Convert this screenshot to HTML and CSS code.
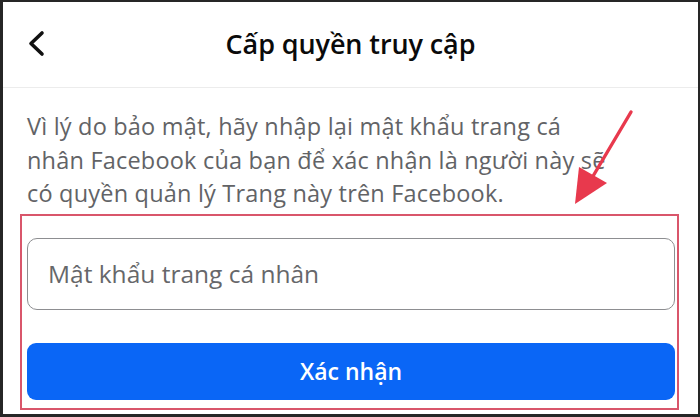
FILE: index.html
```html
<!DOCTYPE html>
<html lang="vi">
<head>
<meta charset="utf-8">
<title>Cấp quyền truy cập</title>
<link rel="stylesheet" href="styles.css">
</head>
<body>
<div class="frame">
  <header class="header">
    <button class="back" aria-label="Quay lại">
      <svg width="20" height="28" viewBox="0 0 20 28"><path d="M15 3 L4 13.5 L15 24" fill="none" stroke="#111" stroke-width="3.6" stroke-linecap="round" stroke-linejoin="round"/></svg>
    </button>
    <h1 class="title">Cấp quyền truy cập</h1>
    <span></span>
  </header>
  <main class="content">
    <p class="desc">Vì lý do bảo mật, hãy nhập lại mật khẩu trang cá nhân Facebook của bạn để xác nhận là người này sẽ có quyền quản lý Trang này trên Facebook.</p>
    <div class="highlight">
      <div class="field">Mật khẩu trang cá nhân</div>
      <button class="confirm">Xác nhận</button>
    </div>
    <svg class="arrow" width="80" height="110" viewBox="0 0 80 110">
      <line x1="70" y1="4" x2="25" y2="80" stroke="#e8394d" stroke-width="3.4" stroke-linecap="round"/>
      <polygon points="14,96 18,59 46,75" fill="#e8394d"/>
    </svg>
  </main>
</div>
</body>
</html>
```

FILE: styles.css
```css
* { box-sizing: border-box; }
html, body { margin: 0; padding: 0; }
body {
  background: #262626;
  width: 700px;
  height: 417px;
  overflow: hidden;
  font-family: "Open Sans", Roboto, "Liberation Sans", Arial, sans-serif;
}
.frame {
  margin: 2px 2px 3px 3px;
  height: 412px;
  background: #fff;
  display: flex;
  flex-direction: column;
}
.header {
  height: 86px;
  flex: none;
  border-bottom: 1px solid #ececec;
  display: grid;
  grid-template-columns: 1fr auto 1fr;
  align-items: center;
  padding-bottom: 2px;
}
.back {
  justify-self: start;
  margin-left: 24px;
  background: none;
  border: 0;
  padding: 0;
  display: flex;
}
.title {
  margin: 0;
  font-size: 27px;
  font-weight: 600;
  color: #0a0a0a;
  letter-spacing: -0.1px;
}
.content {
  position: relative;
  flex: 1;
}
.desc {
  margin: 22px 86px 0 24px;
  font-size: 23.5px;
  line-height: 33.5px;
  letter-spacing: 0.2px;
  color: #626366;
}
.highlight {
  margin: 3px 19px 0 17px;
  border: 2px solid #d9566b;
  padding: 22px 2px 8px 5px;
  display: flex;
  flex-direction: column;
  gap: 33px;
}
.field {
  height: 72px;
  border: 1.5px solid #8d8e91;
  border-radius: 10px;
  padding-left: 20px;
  display: flex;
  align-items: center;
  font-size: 24.5px;
  color: #66676a;
}
.confirm {
  height: 57px;
  border: 0;
  border-radius: 9px;
  background: #0a66f6;
  color: #fff;
  font-family: inherit;
  font-size: 23px;
  font-weight: 600;
}
.arrow {
  position: absolute;
  left: 558px;
  top: 20px;
}
```
